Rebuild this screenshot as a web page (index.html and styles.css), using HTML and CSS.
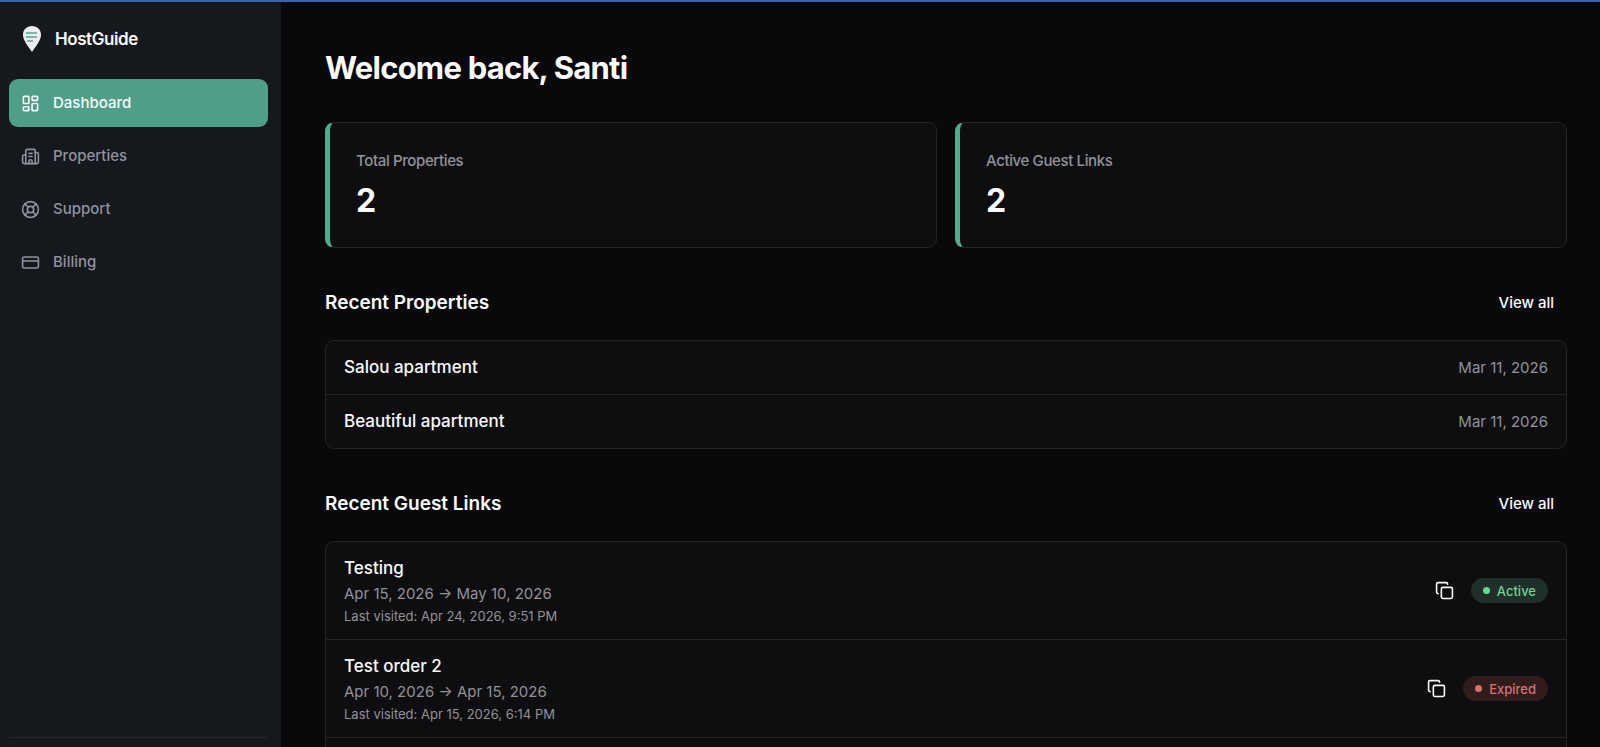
FILE: index.html
```html
<!DOCTYPE html>
<html lang="en">
<head>
    <meta charset="UTF-8">
    <meta name="viewport" content="width=device-width, initial-scale=1.0">
    <title>HostGuide - Dashboard</title>
    <link rel="stylesheet" href="styles.css">
</head>
<body>
    <div class="layout">
        <aside class="sidebar">
            <a href="#" class="brand">
                <svg class="brand-logo" viewBox="0 0 20 28" aria-hidden="true">
                    <path d="M10 1C4.800 1 1 4.800 1 9.800C1 15.500 6 21 10 27C14 21 19 15.500 19 9.800C19 4.800 15.200 1 10 1Z" fill="#ececee"/>
                    <path d="M7 8h8M7 12h8M5 16h6" stroke="#6b9c91" stroke-width="1.500"/>
                    <path d="M4 8h4M4 12h4" stroke="#5cc9a6" stroke-width="2.200"/>
                </svg>
                <span>HostGuide</span>
            </a>

            <nav class="nav">
                <a href="#" class="nav-item active">
                    <svg class="icon" viewBox="0 0 24 24" aria-hidden="true">
                        <rect width="7" height="9" x="3" y="3" rx="1"/>
                        <rect width="7" height="5" x="14" y="3" rx="1"/>
                        <rect width="7" height="9" x="14" y="12" rx="1"/>
                        <rect width="7" height="5" x="3" y="16" rx="1"/>
                    </svg>
                    Dashboard
                </a>
                <a href="#" class="nav-item">
                    <svg class="icon" viewBox="0 0 24 24" aria-hidden="true">
                        <path d="M10 12h4"/>
                        <path d="M10 8h4"/>
                        <path d="M14 21v-3a2 2 0 0 0-4 0v3"/>
                        <path d="M6 10H4a2 2 0 0 0-2 2v7a2 2 0 0 0 2 2h16a2 2 0 0 0 2-2V9a2 2 0 0 0-2-2h-2"/>
                        <path d="M6 21V5a2 2 0 0 1 2-2h8a2 2 0 0 1 2 2v16"/>
                    </svg>
                    Properties
                </a>
                <a href="#" class="nav-item">
                    <svg class="icon" viewBox="0 0 24 24" aria-hidden="true">
                        <circle cx="12" cy="12" r="10"/>
                        <path d="m4.930 4.930 4.240 4.240"/>
                        <path d="m14.830 9.170 4.240-4.240"/>
                        <path d="m14.830 14.830 4.240 4.240"/>
                        <path d="m9.170 14.830-4.240 4.240"/>
                        <circle cx="12" cy="12" r="4"/>
                    </svg>
                    Support
                </a>
                <a href="#" class="nav-item">
                    <svg class="icon" viewBox="0 0 24 24" aria-hidden="true">
                        <rect width="20" height="14" x="2" y="5" rx="2"/>
                        <path d="M2 10h20"/>
                    </svg>
                    Billing
                </a>
            </nav>

            <div class="sidebar-footer"></div>
        </aside>

        <main class="content">
            <h1>Welcome back, Santi</h1>

            <div class="stats">
                <div class="stat-card">
                    <p class="stat-label">Total Properties</p>
                    <p class="stat-value">2</p>
                </div>
                <div class="stat-card">
                    <p class="stat-label">Active Guest Links</p>
                    <p class="stat-value">2</p>
                </div>
            </div>

            <section class="section">
                <div class="section-header">
                    <h2>Recent Properties</h2>
                    <a href="#" class="view-all">View all</a>
                </div>
                <ul class="list">
                    <li class="property-row">
                        <span class="row-title">Salou apartment</span>
                        <span class="row-date">Mar 11, 2026</span>
                    </li>
                    <li class="property-row">
                        <span class="row-title">Beautiful apartment</span>
                        <span class="row-date">Mar 11, 2026</span>
                    </li>
                </ul>
            </section>

            <section class="section">
                <div class="section-header">
                    <h2>Recent Guest Links</h2>
                    <a href="#" class="view-all">View all</a>
                </div>
                <ul class="list">
                    <li class="link-row">
                        <div class="link-info">
                            <p class="row-title">Testing</p>
                            <p class="row-date">Apr 15, 2026 → May 10, 2026</p>
                            <p class="row-visited">Last visited: Apr 24, 2026, 9:51 PM</p>
                        </div>
                        <button type="button" class="copy-btn" aria-label="Copy link">
                            <svg class="icon" viewBox="0 0 24 24" aria-hidden="true">
                                <rect width="14" height="14" x="8" y="8" rx="2"/>
                                <path d="M4 16c-1.100 0-2-.9-2-2V4c0-1.100.9-2 2-2h10c1.100 0 2 .9 2 2"/>
                            </svg>
                        </button>
                        <span class="badge badge-active">Active</span>
                    </li>
                    <li class="link-row">
                        <div class="link-info">
                            <p class="row-title">Test order 2</p>
                            <p class="row-date">Apr 10, 2026 → Apr 15, 2026</p>
                            <p class="row-visited">Last visited: Apr 15, 2026, 6:14 PM</p>
                        </div>
                        <button type="button" class="copy-btn" aria-label="Copy link">
                            <svg class="icon" viewBox="0 0 24 24" aria-hidden="true">
                                <rect width="14" height="14" x="8" y="8" rx="2"/>
                                <path d="M4 16c-1.100 0-2-.9-2-2V4c0-1.100.9-2 2-2h10c1.100 0 2 .9 2 2"/>
                            </svg>
                        </button>
                        <span class="badge badge-expired">Expired</span>
                    </li>
                    <li class="link-row"></li>
                </ul>
            </section>
        </main>
    </div>
</body>
</html>
```
FILE: styles.css
```css
:root {
    --bg: #09090b;
    --card: #0e0e10;
    --border: #242427;
    --sidebar: #15181d;
    --sidebar-border: #25282d;
    --primary: #4f9e87;
    --accent: #52ab8e;
    --text: #fafafa;
    --muted: #929299;
    --nav-text: #9092a0;
}

* {
    box-sizing: border-box;
}

body {
    margin: 0;
    background: var(--bg);
    color: var(--text);
    font-family: Inter, "Liberation Sans", sans-serif;
    font-size: 15px;
    line-height: 24px;
}

h1, h2, p, ul {
    margin: 0;
    padding: 0;
}

a {
    color: inherit;
    text-decoration: none;
}

.layout {
    display: flex;
    height: 100vh;
    border-top: 2px solid #3865ad;
}

.icon {
    width: 19px;
    height: 19px;
    flex-shrink: 0;
    fill: none;
    stroke: currentColor;
    stroke-width: 2;
    stroke-linecap: round;
    stroke-linejoin: round;
}

/* Sidebar */
.sidebar {
    display: flex;
    flex-direction: column;
    flex: 0 0 281px;
    padding: 16px 13px 0 9px;
    background: var(--sidebar);
}

.brand {
    display: flex;
    align-items: center;
    gap: 13px;
    height: 41px;
    padding-left: 13px;
    font-size: 17px;
    font-weight: 600;
    letter-spacing: -0.025em;
}

.brand-logo {
    width: 20px;
    height: 28px;
}

.nav {
    display: flex;
    flex-direction: column;
    gap: 5px;
    flex: 1;
    margin-top: 20px;
}

.nav-item {
    display: flex;
    align-items: center;
    gap: 13px;
    height: 48px;
    padding: 0 12px;
    border-radius: 9px;
    color: var(--nav-text);
    font-weight: 500;
}

.nav-item.active {
    background: var(--primary);
    color: var(--text);
}

.sidebar-footer {
    height: 10px;
    border-top: 1px solid var(--sidebar-border);
}

/* Main content */
.content {
    flex: 1;
    min-width: 0;
    padding: 45px 33px 44px 44px;
    overflow-y: auto;
    scrollbar-width: none;
}

h1 {
    font-size: 31px;
    line-height: 42px;
    font-weight: 700;
    letter-spacing: -0.025em;
}

.stats {
    display: grid;
    grid-template-columns: 1fr 1fr;
    gap: 18px;
    margin-top: 33px;
}

.stat-card {
    padding: 26px;
    border: 1px solid var(--border);
    border-left: 5px solid var(--accent);
    border-radius: 9px;
    background: var(--card);
}

.stat-label {
    color: var(--muted);
    font-weight: 500;
    letter-spacing: -0.025em;
}

.stat-value {
    margin-top: 8px;
    font-size: 32px;
    line-height: 40px;
    font-weight: 700;
}

.section {
    margin-top: 35px;
}

.section-header {
    display: flex;
    align-items: center;
    justify-content: space-between;
    height: 40px;
    margin-bottom: 17px;
}

h2 {
    font-size: 19px;
    line-height: 28px;
    font-weight: 600;
}

.view-all {
    padding: 0 13px;
    font-weight: 500;
}

.list {
    list-style: none;
    border: 1px solid var(--border);
    border-radius: 9px;
    background: var(--card);
}

.list li {
    border-bottom: 1px solid var(--border);
}

.list li:last-child {
    border-bottom: none;
}

.property-row {
    display: flex;
    align-items: center;
    justify-content: space-between;
    padding: 14px 18px;
}

.row-title {
    font-size: 17px;
    line-height: 25px;
    font-weight: 500;
}

.row-date {
    color: var(--muted);
}

.row-visited {
    color: var(--muted);
    font-size: 13px;
    line-height: 20px;
}

.link-row {
    display: flex;
    align-items: center;
    gap: 9px;
    min-height: 98px;
    padding: 13px 18px;
}

.link-info {
    flex: 1;
    padding-top: 1px;
}

.link-info .row-date {
    margin-top: 1px;
}

.copy-btn {
    display: flex;
    align-items: center;
    justify-content: center;
    width: 35px;
    height: 35px;
    padding: 0;
    border: none;
    border-radius: 7px;
    background: none;
    color: var(--text);
    cursor: pointer;
}

.badge {
    display: flex;
    align-items: center;
    gap: 7px;
    height: 25px;
    padding: 0 12px;
    border-radius: 13px;
    font-size: 13px;
    font-weight: 500;
}

.badge::before {
    content: "";
    width: 7px;
    height: 7px;
    border-radius: 50%;
    background: currentColor;
}

.badge-active {
    background: #1e3027;
    color: #6bd394;
}

.badge-expired {
    background: #311c1d;
    color: #d9706f;
}
```
